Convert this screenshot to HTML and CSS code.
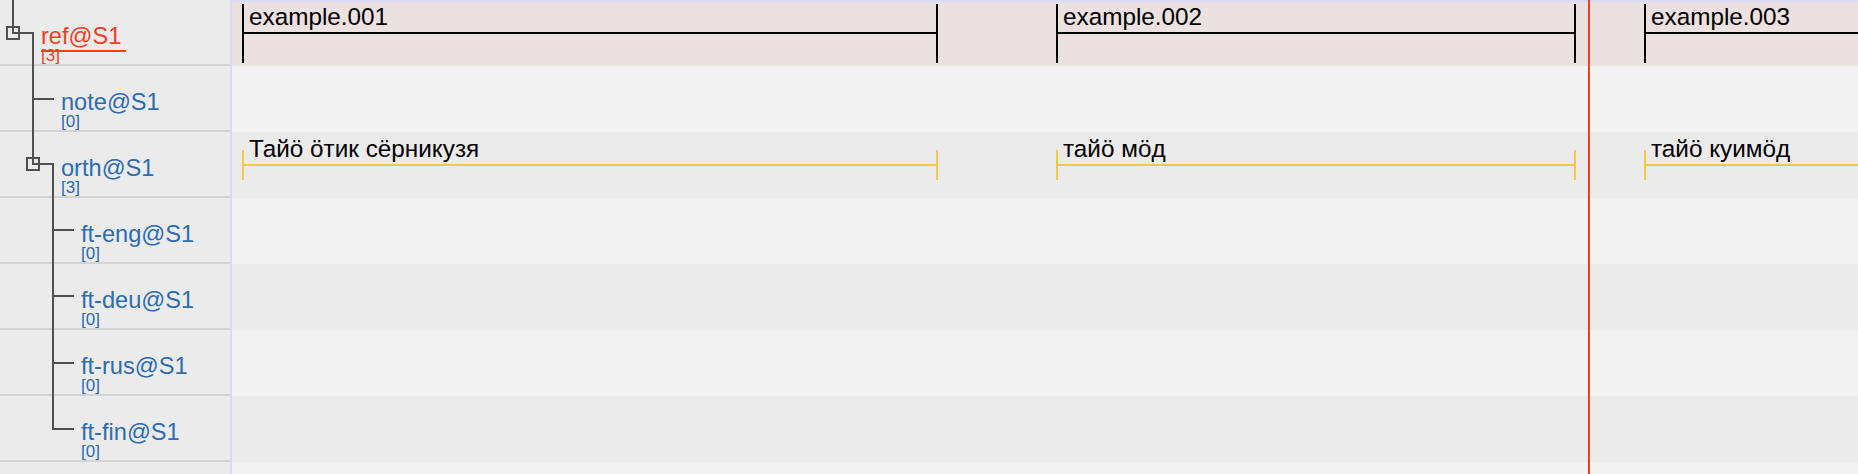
FILE: index.html
```html
<!DOCTYPE html>
<html>
<head>
<meta charset="utf-8">
<link rel="stylesheet" href="styles.css">
</head>
<body>
<div class="app">
  <div class="tiers">
    <svg class="tree" width="230" height="474" viewBox="0 0 230 474">
      <path d="M13 0V33H33V164H53V429H74" />
      <path d="M33 99H54" />
      <path d="M53 230H74" />
      <path d="M53 296H74" />
      <path d="M53 363H74" />
      <rect x="7" y="27" width="12" height="12" />
      <rect x="27" y="158" width="12" height="12" />
    </svg>
    <div class="tier l0 sel"><div class="name">ref@S1</div><div class="count">[3]</div></div>
    <div class="tier l1"><div class="name">note@S1</div><div class="count">[0]</div></div>
    <div class="tier l1"><div class="name">orth@S1</div><div class="count">[3]</div></div>
    <div class="tier l2"><div class="name">ft-eng@S1</div><div class="count">[0]</div></div>
    <div class="tier l2"><div class="name">ft-deu@S1</div><div class="count">[0]</div></div>
    <div class="tier l2"><div class="name">ft-rus@S1</div><div class="count">[0]</div></div>
    <div class="tier l2"><div class="name">ft-fin@S1</div><div class="count">[0]</div></div>
  </div>
  <div class="timeline">
    <div class="track ref">
      <div class="ann ref-ann" style="left:10px;width:696px"><div class="bar"></div><div class="lbl">example.001</div></div>
      <div class="ann ref-ann" style="left:824px;width:520px"><div class="bar"></div><div class="lbl">example.002</div></div>
      <div class="ann ref-ann open" style="left:1412px;width:700px"><div class="bar"></div><div class="lbl">example.003</div></div>
    </div>
    <div class="track light"></div>
    <div class="track dark">
      <div class="ann orth-ann" style="left:10px;width:696px"><div class="bar"></div><div class="lbl">Тайӧ ӧтик сёрникузя</div></div>
      <div class="ann orth-ann" style="left:824px;width:520px"><div class="bar"></div><div class="lbl">тайӧ мӧд</div></div>
      <div class="ann orth-ann open" style="left:1412px;width:700px"><div class="bar"></div><div class="lbl">тайӧ куимӧд</div></div>
    </div>
    <div class="track light"></div>
    <div class="track dark"></div>
    <div class="track light"></div>
    <div class="track dark"></div>
    <div class="cursor"></div>
  </div>
</div>
</body>
</html>
```
FILE: styles.css
```css
html, body {
  margin: 0;
  padding: 0;
  height: 100%;
  overflow: hidden;
}

body {
  font-family: "Liberation Sans", Arial, sans-serif;
  background: #f3f3f3;
}

.app {
  display: flex;
  height: 474px;
}

.tiers {
  position: relative;
  flex: none;
  width: 230px;
  background: #ebebeb;
  border-right: 2px solid #d9d9f6;
}

.tree {
  position: absolute;
  left: 0;
  top: 0;
  z-index: 2;
  pointer-events: none;
}

.tree path,
.tree rect {
  fill: none;
  stroke: #505050;
  stroke-width: 2;
}

.tier {
  box-sizing: border-box;
  height: 66px;
  border-bottom: 2px solid #d3d3d3;
  padding-top: 24px;
  display: flex;
  flex-direction: column;
  align-items: flex-start;
  color: #2c6cb2;
}

.tier.l0 { padding-left: 41px; }
.tier.l1 { padding-left: 61px; }
.tier.l2 { padding-left: 81px; }

.name {
  font-size: 23.6px;
  line-height: 24px;
  white-space: nowrap;
}

.count {
  font-size: 17px;
  line-height: 16px;
  white-space: nowrap;
}

.tier.sel {
  color: #f0401f;
}

.tier.sel .name {
  border-bottom: 2px solid #f0401f;
  padding: 0 5px 2px 0;
  margin-bottom: -4px;
}

.timeline {
  position: relative;
  flex: 1;
  overflow: hidden;
  background: #f3f3f3;
}

.track {
  position: relative;
  height: 66px;
}

.track.ref {
  background: #ebe1e0;
  box-shadow: inset 0 2px 0 #d9d9f6;
}

.track.light { background: #f3f3f3; }
.track.dark { background: #ebebeb; }

.ann {
  position: absolute;
  top: 0;
  height: 66px;
}

.ann .bar {
  position: absolute;
  left: 0;
  right: 0;
  top: 32px;
  height: 2px;
}

.ann::before,
.ann::after {
  content: "";
  position: absolute;
  width: 2px;
}

.ann::before { left: 0; }
.ann::after { right: 0; }
.ann.open::after { display: none; }

.ref-ann .bar,
.ref-ann::before,
.ref-ann::after {
  background: #000000;
}

.ref-ann::before,
.ref-ann::after {
  top: 4px;
  height: 59px;
}

.orth-ann .bar,
.orth-ann::before,
.orth-ann::after {
  background: #f6c940;
}

.orth-ann::before,
.orth-ann::after {
  top: 18px;
  height: 30px;
}

.ann .lbl {
  position: absolute;
  left: 7px;
  top: 3px;
  font-size: 24.3px;
  line-height: 28px;
  color: #000000;
  white-space: nowrap;
}

.cursor {
  position: absolute;
  left: 1356px;
  top: 0;
  bottom: 0;
  width: 2px;
  background: #ee4124;
  z-index: 3;
}
```
